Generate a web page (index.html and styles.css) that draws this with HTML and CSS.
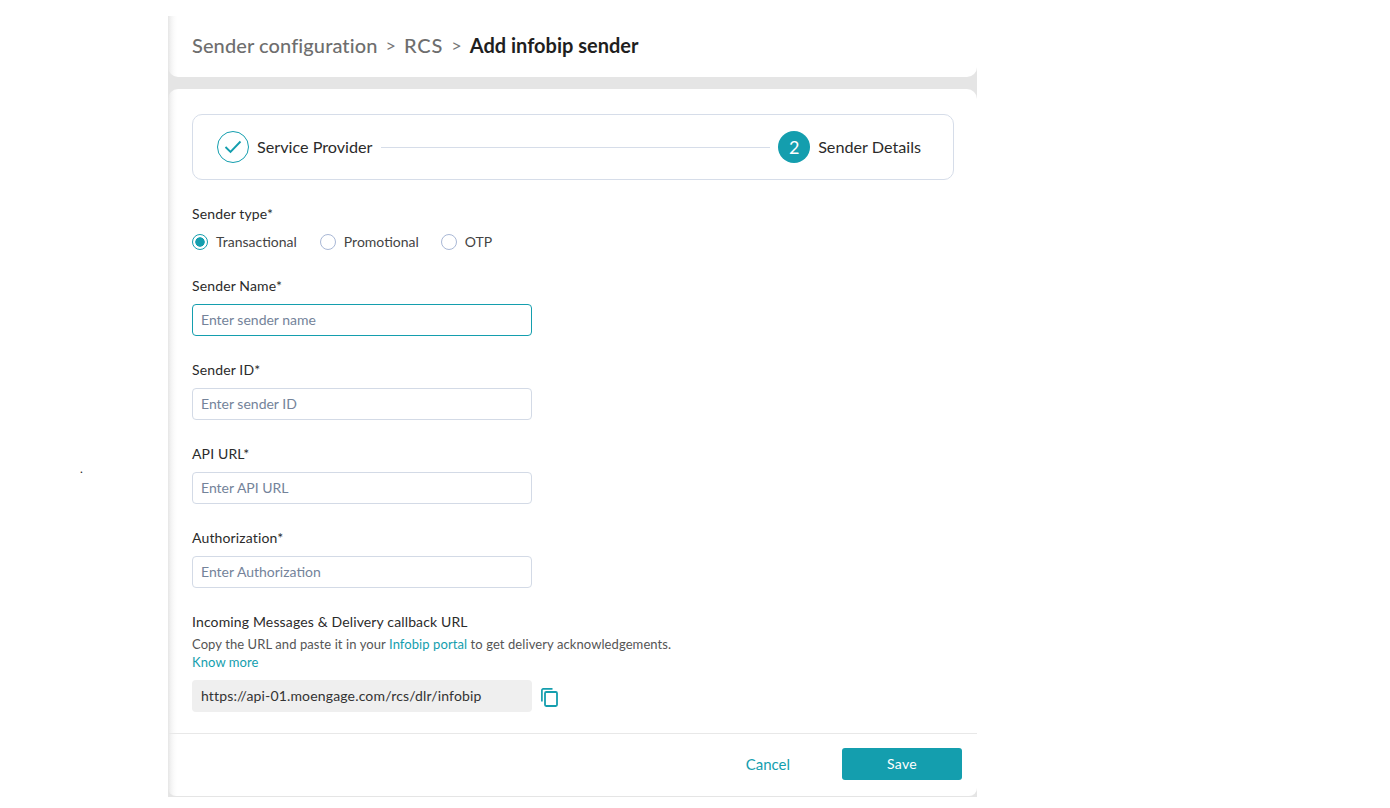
FILE: index.html
```html
<!DOCTYPE html>
<html lang="en">
<head>
<meta charset="utf-8">
<title>Add infobip sender</title>
<link rel="stylesheet" href="styles.css">
</head>
<body>
<span class="stray">.</span>
<main class="panel">
  <header class="card head">
    <nav class="crumbs">
      <span class="crumb">Sender configuration</span>
      <span class="sep">&gt;</span>
      <span class="crumb crumb-short">RCS</span>
      <span class="sep">&gt;</span>
      <span class="current">Add infobip sender</span>
    </nav>
  </header>
  <section class="card content">
    <div class="form">
      <div class="stepper">
        <span class="step-done">
          <svg width="18" height="14" viewBox="0 0 18 14"><path d="M1.5 7 L6.5 12 L16.5 1.5" fill="none" stroke="#149eae" stroke-width="1.9"/></svg>
        </span>
        <span class="step-label">Service Provider</span>
        <span class="step-line"></span>
        <span class="step-num">2</span>
        <span class="step-label">Sender Details</span>
      </div>

      <div class="type-group">
        <div class="label">Sender type*</div>
        <div class="radios">
          <span class="radio"><span class="dot on"></span>Transactional</span>
          <span class="radio"><span class="dot"></span>Promotional</span>
          <span class="radio"><span class="dot"></span>OTP</span>
        </div>
      </div>

      <div class="field">
        <div class="label">Sender Name*</div>
        <div class="input focus">Enter sender name</div>
      </div>
      <div class="field">
        <div class="label">Sender ID*</div>
        <div class="input">Enter sender ID</div>
      </div>
      <div class="field">
        <div class="label">API URL*</div>
        <div class="input">Enter API URL</div>
      </div>
      <div class="field">
        <div class="label">Authorization*</div>
        <div class="input">Enter Authorization</div>
      </div>

      <div class="callback">
        <div class="label">Incoming Messages &amp; Delivery callback URL</div>
        <p class="help">Copy the URL and paste it in your <a class="link">Infobip portal</a> to get delivery acknowledgements.<br><a class="link">Know more</a></p>
        <div class="url-row">
          <div class="url">https://api-01.moengage.com/rcs/dlr/infobip</div>
          <svg class="copy" width="17" height="19" viewBox="0 0 17 19"><path d="M11.5 0.9H2.2A1.3 1.3 0 0 0 0.9 2.2V13.5" fill="none" stroke="#149eae" stroke-width="1.7"/><rect x="4" y="4" width="12" height="14" rx="1.2" fill="none" stroke="#149eae" stroke-width="1.8"/></svg>
        </div>
      </div>
    </div>
    <footer class="actions">
      <span class="cancel">Cancel</span>
      <span class="save">Save</span>
    </footer>
  </section>
</main>
</body>
</html>
```

FILE: styles.css
```css
* { box-sizing: border-box; }
html, body { margin: 0; height: 808px; overflow: hidden; background: #fff; }
body { font-family: "Lato", "Liberation Sans", sans-serif; color: #2b2b2b; position: relative; }
.stray { position: absolute; left: 80px; top: 461px; font-size: 12px; color: #222; }
.panel { width: 809px; height: 781px; margin: 16px 0 0 168px; padding-bottom: 1px; background: #e5e5e5; display: flex; flex-direction: column; gap: 12px; }
.card { background: linear-gradient(90deg, #e6e6e6 0, #f3f3f3 3px, #fbfbfb 6px, #fff 9px); }
.head { height: 61px; border-radius: 0 0 10px 10px; padding: 15px 0 0 24px; }
.crumbs { display: flex; align-items: center; gap: 8px; font-size: 20px; line-height: 28px; font-weight: 500; white-space: nowrap; }
.crumb { color: #6e6e6e; letter-spacing: 0.1px; }
.crumb-short { letter-spacing: 0.9px; }
.sep { color: #777; font-size: 18px; font-weight: 400; }
.current { color: #1f1f1f; font-weight: 700; }
.content { flex: 1; border-radius: 10px 10px 8px 8px; display: flex; flex-direction: column; }
.form { padding: 25px 23px 0 24px; flex: 1; }
.stepper { height: 66px; border: 1px solid #d6dde9; border-radius: 10px; display: flex; align-items: center; padding: 0 32px 0 24px; font-size: 16.2px; }
.step-done, .step-num { width: 32px; height: 32px; border-radius: 50%; display: flex; align-items: center; justify-content: center; flex: none; }
.step-done { border: 1.3px solid #149eae; }
.step-num { background: #149eae; color: #fff; font-size: 18px; }
.step-label { margin-left: 8px; margin-bottom: 1px; color: #2b2b2b; white-space: nowrap; }
.step-line { flex: 1; height: 1px; background: #d6dde9; margin: 1px 8px 0; }
.label { font-size: 14px; line-height: 18px; color: #2b2b2b; letter-spacing: 0.14px; }
.type-group { margin-top: 25px; }
.radios { display: flex; gap: 22px; margin-top: 10px; font-size: 14px; line-height: 18px; color: #444; }
.radio { display: flex; align-items: center; gap: 8px; }
.radio:first-child { margin-right: 1px; }
.dot { width: 16px; height: 16px; border-radius: 50%; border: 1px solid #a9b8d6; background: #fff; flex: none; }
.dot.on { border-color: #149eae; background: radial-gradient(circle, #149eae 0 4.4px, #fff 5px); }
.field { margin-top: 26px; }
.field + .field { margin-top: 25px; }
.input { width: 340px; height: 32px; margin-top: 9px; border: 1px solid #d3dae6; border-radius: 4px; padding: 0 8px; font-size: 14px; line-height: 30px; color: #74839a; }
.input.focus { border-color: #149eae; }
.callback { margin-top: 25px; }
.help { margin: 4px 0 0; font-size: 13px; line-height: 18px; color: #555; letter-spacing: 0.085px; }
.link { color: #149eae; }
.url-row { display: flex; align-items: center; gap: 9px; margin-top: 9px; }
.url { width: 340px; height: 32px; background: #efefef; border-radius: 4px; padding: 0 9px; font-size: 14px; line-height: 32px; color: #333; letter-spacing: 0.16px; }
.copy { flex: none; margin-top: 2px; }
.actions { height: 63px; border-top: 1px solid #e8e8e8; display: flex; align-items: flex-start; justify-content: flex-end; padding: 14px 15px 0 0; gap: 52px; }
.cancel { color: #149eae; font-size: 15px; line-height: 32px; }
.save { width: 120px; height: 32px; border-radius: 3px; background: #149eae; color: #fff; font-size: 14px; line-height: 32px; text-align: center; letter-spacing: 0.3px; }
```
